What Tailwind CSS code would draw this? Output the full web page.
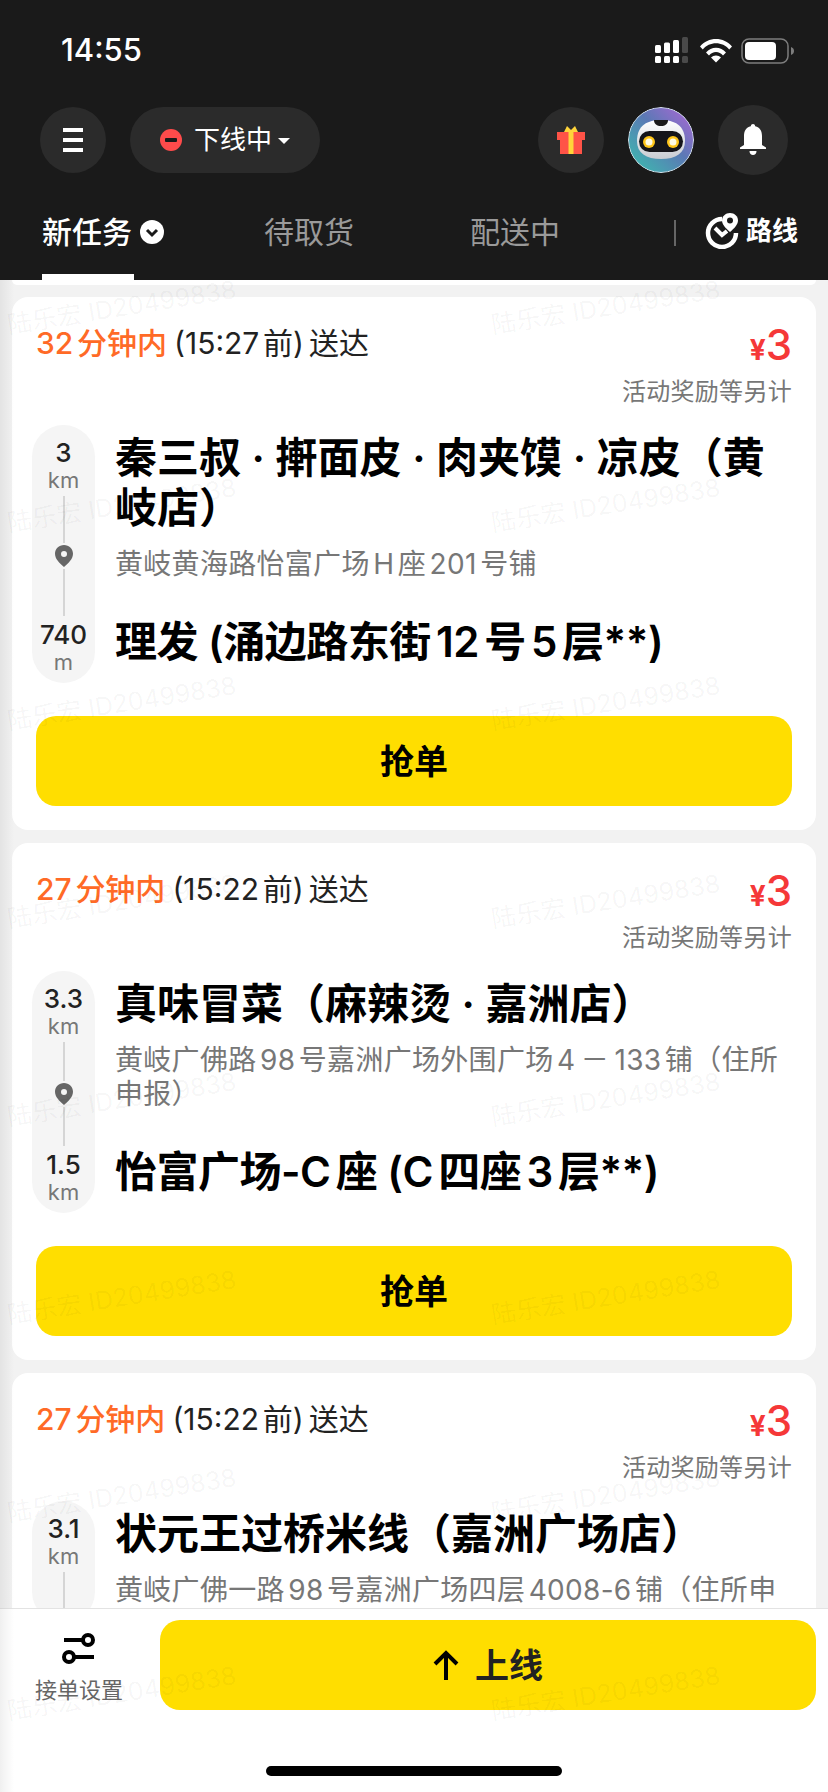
<!DOCTYPE html>
<html lang="zh-CN">
<head>
<meta charset="utf-8">
<script src="https://cdn.jsdelivr.net/npm/@tailwindcss/browser@4"></script>
</head>
<body>
<div class="relative w-[828px] h-[1792px] overflow-hidden flex flex-col bg-[#f2f2f2] font-['Inter','Noto_Sans_CJK_SC',sans-serif] [text-autospace:normal]">

  <!-- header -->
  <header class="relative z-20 h-[280px] shrink-0 bg-[#1a1a1a] text-white">
    <div class="h-[100px] flex items-start justify-between pl-[61px] pr-[34px] pt-[31px]">
      <span class="text-[31px] leading-[38px] font-medium">14:55</span>
      <div class="flex items-center pt-[6px]">
        <svg class="mr-[12px]" width="33" height="27" viewBox="0 0 33 27"><g fill="#fff"><rect x="0" y="19" width="6" height="7" rx="1.5"/><rect x="9" y="19" width="6" height="7" rx="1.5"/><rect x="18" y="19" width="6" height="7" rx="1.5"/><rect x="0" y="8" width="6" height="8" rx="1.5"/><rect x="9" y="5.500" width="6" height="10.500" rx="1.500"/><rect x="18" y="3" width="6" height="13" rx="1.500"/></g><g fill="#4a4a4a"><rect x="27" y="19" width="6" height="7" rx="1.500"/><rect x="27" y="0" width="6" height="16" rx="1.500"/></g></svg>
        <svg class="mr-[9px]" width="32" height="25" viewBox="0 0 32 25" fill="#fff"><path d="M0 8.500C4 3.500 10 1 16 1s12 2.500 16 7.500l-2.800 3C26 7.500 21 5.300 16 5.300S6 7.500 2.800 11.500z"/><path d="M6 14.500c2.600-3 6.200-4.700 10-4.700s7.400 1.700 10 4.700l-3 3c-1.800-2.200-4.300-3.400-7-3.400s-5.200 1.200-7 3.400z"/><path d="M11 19.500c1.300-1.300 3-2 5-2s3.700.7 5 2l-5 5z"/></svg>
        <svg width="53" height="26" viewBox="0 0 53 26"><rect x="1" y="1" width="46" height="24" rx="7" fill="none" stroke="#7d7d7d" stroke-width="1.500"/><rect x="4" y="4" width="31" height="18" rx="4" fill="#fff"/><path d="M50 9c2 .7 3 2.200 3 4s-1 3.300-3 4z" fill="#7d7d7d"/></svg>
      </div>
    </div>

    <div class="flex items-center h-[76px] pl-[40px] pr-[40px] mt-[2px]">
      <div class="w-[66px] h-[66px] rounded-full bg-[#2b2b2b] flex flex-col items-center justify-center gap-[6px]">
        <span class="block w-[20px] h-[4px] bg-white"></span>
        <span class="block w-[20px] h-[4px] bg-white"></span>
        <span class="block w-[20px] h-[4px] bg-white"></span>
      </div>
      <div class="ml-[24px] w-[190px] h-[66px] rounded-full bg-[#2b2b2b] flex items-center pl-[30px]">
        <span class="relative w-[22px] h-[22px] rounded-full bg-[#ff4b4b] flex items-center justify-center"><span class="block w-[12px] h-[4px] rounded-[1px] bg-[#1a1a1a]"></span></span>
        <span class="ml-[12px] text-[26px] leading-[34px] text-white">下线中</span>
        <span class="ml-[6px] mt-[2px] w-0 h-0 border-x-[6px] border-x-transparent border-t-[6px] border-t-white"></span>
      </div>
      <div class="ml-auto w-[66px] h-[66px] rounded-full bg-[#2b2b2b] flex items-center justify-center">
        <svg width="30" height="30" viewBox="0 0 30 30"><path d="M8 7 11 1l4 4 4-4 3 6z" fill="#ffd43a"/><rect x="1" y="7" width="28" height="8" fill="#ff5347"/><rect x="4" y="15" width="22" height="14" fill="#ff5347"/><rect x="12.500" y="7" width="5" height="22" fill="#ffd43a"/></svg>
      </div>
      <div class="ml-[24px] w-[66px] h-[66px] rounded-full overflow-hidden">
        <svg width="66" height="66" viewBox="0 0 66 66">
          <defs>
            <linearGradient id="av" x1="0" y1="1" x2="1" y2="0"><stop offset="0" stop-color="#39c2ae"/><stop offset=".55" stop-color="#5b79b5"/><stop offset="1" stop-color="#b266d8"/></linearGradient>
            <linearGradient id="hd" x1="0" y1="0" x2="0" y2="1"><stop offset="0" stop-color="#ffffff"/><stop offset="1" stop-color="#c8ccd2"/></linearGradient>
          </defs>
          <circle cx="33" cy="33" r="32.500" fill="url(#av)" stroke="#d8e6f0" stroke-width="1"/>
          <path d="M9 34C9 18 20 13 33 13s24 5 24 21c0 12-9 18-24 18S9 46 9 34z" fill="url(#hd)"/>
          <path d="M26 13h14c0 4-3 6-7 6s-7-2-7-6z" fill="#1a1a1a"/>
          <rect x="11" y="24" width="44" height="21" rx="10.500" fill="#15151a"/>
          <circle cx="21" cy="35" r="6" fill="#ffc61a"/><circle cx="21" cy="35" r="3.500" fill="#fffbe6"/>
          <circle cx="45" cy="35" r="6" fill="#ffc61a"/><circle cx="45" cy="35" r="3.500" fill="#fffbe6"/>
        </svg>
      </div>
      <div class="ml-[24px] w-[70px] h-[70px] rounded-full bg-[#2b2b2b] flex items-center justify-center">
        <svg width="26" height="32" viewBox="0 0 26 32" fill="#fff"><path d="M13 0c1.200 0 2 .9 2.200 2.200C20 3.300 22 7 22 12v9l4 2.500V25H0v-1.500L4 21v-9c0-5 2-8.700 6.800-9.800C11 .9 11.800 0 13 0z"/><path d="M9.500 27h7c0 2.500-1.500 4-3.500 4s-3.500-1.500-3.500-4z"/></svg>
      </div>
    </div>

    <nav class="absolute left-0 right-0 top-[206px] h-[74px]">
      <div class="absolute left-[42px] top-[6px] flex items-center">
        <span class="text-[30px] leading-[40px] font-medium text-white">新任务</span>
        <svg class="ml-[8px]" width="24" height="24" viewBox="0 0 24 24"><circle cx="12" cy="12" r="12" fill="#fff"/><path d="M7 10l5 5 5-5" fill="none" stroke="#1a1a1a" stroke-width="3"/></svg>
      </div>
      <span class="absolute left-[42px] bottom-0 w-[92px] h-[6px] bg-white"></span>
      <span class="absolute left-[264px] top-[6px] text-[30px] leading-[40px] text-[#9a9a9a]">待取货</span>
      <span class="absolute left-[470px] top-[6px] text-[30px] leading-[40px] text-[#9a9a9a]">配送中</span>
      <span class="absolute left-[674px] top-[14px] w-[1.500px] h-[26px] bg-[#666]"></span>
      <div class="absolute left-[705px] top-[7px] flex items-center">
        <svg width="34" height="36" viewBox="0 0 34 36" fill="none"><path d="M17 6A14 14 0 1 0 31 20" stroke="#fff" stroke-width="4.500"/><path d="M10 15l7 7 5-4" stroke="#fff" stroke-width="4"/><path d="M25 0c4.500 0 8 3.300 8 7.500 0 4-4 8-8 11.500-4-3.500-8-7.500-8-11.500C17 3.300 20.500 0 25 0z" fill="#fff"/><circle cx="25" cy="7.500" r="3" fill="#1a1a1a"/></svg>
        <span class="ml-[7px] text-[26px] leading-[36px] font-semibold text-white">路线</span>
      </div>
    </nav>
  </header>

  <!-- list -->
  <main class="flex-1 min-h-0 overflow-hidden flex flex-col gap-[13px]">
    <div class="h-[5px] shrink-0 mx-[12px] bg-white rounded-b-[5px] -mb-[1px]"></div>

    <article class="shrink-0 mx-[12px] bg-white rounded-[16px] px-[24px] pt-[26px] pb-[24px]">
      <div class="flex justify-between items-start">
        <p class="text-[30px] leading-[40px] text-[#222]"><span class="font-medium text-[#ff6a26]">32分钟内</span><span class="ml-[7px]">(15:27前)</span><span class="ml-[5px]">送达</span></p>
        <div class="flex flex-col items-end">
          <p class="h-[44px] flex items-baseline text-[#f53838] font-medium"><span class="text-[28px] leading-[44px] font-bold">¥</span><span class="text-[42px] leading-[44px]">3</span></p>
          <p class="mt-[8px] text-[24px] leading-[34px] tracking-[0.3px] text-[#777]">活动奖励等另计</p>
        </div>
      </div>
      <div class="mt-[16px] flex gap-[20px] -ml-[4px]">
        <div class="w-[63px] shrink-0 rounded-full bg-[#f5f5f5] flex flex-col items-center pt-[13px] pb-[9px]">
          <span class="text-[26px] leading-[30px] font-medium text-[#222]">3</span>
          <span class="text-[22px] leading-[24px] text-[#777]">km</span>
          <span class="w-[2px] flex-1 bg-[#d5d5d5] mt-[4px]"></span>
          <svg class="my-[2px]" width="18" height="22" viewBox="0 0 18 22"><path fill="#666" fill-rule="evenodd" d="M9 0c5 0 9 3.800 9 8.700 0 5-4.500 9.500-9 13.300C4.500 18.200 0 13.700 0 8.700 0 3.800 4 0 9 0zm0 6a3 3 0 1 0 0 6 3 3 0 0 0 0-6z"/></svg>
          <span class="w-[2px] flex-1 bg-[#d5d5d5] mb-[4px]"></span>
          <span class="text-[26px] leading-[30px] font-medium text-[#222]">740</span>
          <span class="text-[22px] leading-[24px] text-[#777]">m</span>
        </div>
        <div class="flex-1 min-w-0 pt-[8px] pb-[16px]">
          <h2 class="text-[42px] leading-[50px] font-semibold text-black">秦三叔 · 搟面皮 · 肉夹馍 · 凉皮（黄岐店）</h2>
          <p class="mt-[14px] text-[28px] leading-[34px] tracking-[0.3px] text-[#777]">黄岐黄海路怡富广场H座201号铺</p>
          <h2 class="mt-[36px] text-[42px] leading-[50px] tracking-[-0.5px] font-semibold text-black">理发 (涌边路东街12号5层**)</h2>
        </div>
      </div>
      <button class="mt-[33px] w-full h-[90px] rounded-[20px] bg-[#ffde00] text-[34px] font-semibold text-black">抢单</button>
    </article>

    <article class="shrink-0 mx-[12px] bg-white rounded-[16px] px-[24px] pt-[26px] pb-[24px]">
      <div class="flex justify-between items-start">
        <p class="text-[30px] leading-[40px] text-[#222]"><span class="font-medium text-[#ff6a26]">27分钟内</span><span class="ml-[7px]">(15:22前)</span><span class="ml-[5px]">送达</span></p>
        <div class="flex flex-col items-end">
          <p class="h-[44px] flex items-baseline text-[#f53838] font-medium"><span class="text-[28px] leading-[44px] font-bold">¥</span><span class="text-[42px] leading-[44px]">3</span></p>
          <p class="mt-[8px] text-[24px] leading-[34px] tracking-[0.3px] text-[#777]">活动奖励等另计</p>
        </div>
      </div>
      <div class="mt-[16px] flex gap-[20px] -ml-[4px]">
        <div class="w-[63px] shrink-0 rounded-full bg-[#f5f5f5] flex flex-col items-center pt-[13px] pb-[9px]">
          <span class="text-[26px] leading-[30px] font-medium text-[#222]">3.3</span>
          <span class="text-[22px] leading-[24px] text-[#777]">km</span>
          <span class="w-[2px] flex-1 bg-[#d5d5d5] mt-[4px]"></span>
          <svg class="my-[2px]" width="18" height="22" viewBox="0 0 18 22"><path fill="#666" fill-rule="evenodd" d="M9 0c5 0 9 3.800 9 8.700 0 5-4.500 9.500-9 13.300C4.500 18.200 0 13.700 0 8.700 0 3.800 4 0 9 0zm0 6a3 3 0 1 0 0 6 3 3 0 0 0 0-6z"/></svg>
          <span class="w-[2px] flex-1 bg-[#d5d5d5] mb-[4px]"></span>
          <span class="text-[26px] leading-[30px] font-medium text-[#222]">1.5</span>
          <span class="text-[22px] leading-[24px] text-[#777]">km</span>
        </div>
        <div class="flex-1 min-w-0 pt-[8px] pb-[16px]">
          <h2 class="text-[42px] leading-[50px] font-semibold text-black">真味冒菜（麻辣烫 · 嘉洲店）</h2>
          <p class="mt-[14px] text-[28px] leading-[34px] tracking-[0.3px] text-[#777]">黄岐广佛路98号嘉洲广场外围广场4&thinsp;－&thinsp;133铺（住所<br>申报）</p>
          <h2 class="mt-[36px] text-[42px] leading-[50px] tracking-[-0.5px] font-semibold text-black">怡富广场-C座 (C四座3层**)</h2>
        </div>
      </div>
      <button class="mt-[33px] w-full h-[90px] rounded-[20px] bg-[#ffde00] text-[34px] font-semibold text-black">抢单</button>
    </article>

    <article class="shrink-0 mx-[12px] bg-white rounded-[16px] px-[24px] pt-[26px] pb-[24px]">
      <div class="flex justify-between items-start">
        <p class="text-[30px] leading-[40px] text-[#222]"><span class="font-medium text-[#ff6a26]">27分钟内</span><span class="ml-[7px]">(15:22前)</span><span class="ml-[5px]">送达</span></p>
        <div class="flex flex-col items-end">
          <p class="h-[44px] flex items-baseline text-[#f53838] font-medium"><span class="text-[28px] leading-[44px] font-bold">¥</span><span class="text-[42px] leading-[44px]">3</span></p>
          <p class="mt-[8px] text-[24px] leading-[34px] tracking-[0.3px] text-[#777]">活动奖励等另计</p>
        </div>
      </div>
      <div class="mt-[16px] flex gap-[20px] -ml-[4px]">
        <div class="w-[63px] shrink-0 rounded-full bg-[#f5f5f5] flex flex-col items-center pt-[13px] pb-[9px]">
          <span class="text-[26px] leading-[30px] font-medium text-[#222]">3.1</span>
          <span class="text-[22px] leading-[24px] text-[#777]">km</span>
          <span class="w-[2px] flex-1 bg-[#d5d5d5] mt-[4px]"></span>
        </div>
        <div class="flex-1 min-w-0 pt-[8px] pb-[16px]">
          <h2 class="text-[42px] leading-[50px] font-semibold text-black">状元王过桥米线（嘉洲广场店）</h2>
          <p class="mt-[14px] text-[28px] leading-[34px] tracking-[0.3px] text-[#777]">黄岐广佛一路98号嘉洲广场四层4008-6铺（住所申</p>
        </div>
      </div>
    </article>
  </main>

  <!-- bottom bar -->
  <footer class="relative z-[1] h-[184px] shrink-0 bg-white border-t border-[#e3e3e3]">
    <div class="flex items-start pl-[12px] pr-[12px] pt-[11px]">
      <div class="w-[134px] flex flex-col items-center pt-[13px]">
        <svg width="34" height="32" viewBox="0 0 34 32" fill="none" stroke="#000" stroke-width="4"><path d="M2 7h21"/><circle cx="26" cy="7" r="5"/><path d="M32 24H12"/><circle cx="7" cy="24" r="5"/></svg>
        <span class="mt-[9px] text-[22px] leading-[32px] text-[#666]">接单设置</span>
      </div>
      <button class="ml-[14px] flex-1 h-[90px] rounded-[20px] bg-[#ffde00] flex items-center justify-center gap-[16px]">
        <svg width="26" height="30" viewBox="0 0 26 30" fill="none" stroke="#000" stroke-width="4"><path d="M13 30V3M2 14 13 3l11 11"/></svg>
        <span class="text-[34px] font-semibold text-[#222]">上线</span>
      </button>
    </div>
    <span class="absolute left-[266px] top-[157px] w-[296px] h-[10px] rounded-full bg-black"></span>
  </footer>

  <!-- watermark -->
  <div class="absolute inset-0 z-10 pointer-events-none text-[25px] leading-[32px] text-black/[0.045] whitespace-nowrap">
    <span class="absolute left-[6px] top-[291px] -rotate-[9deg]">陆乐宏 ID20499838</span>
    <span class="absolute left-[490px] top-[291px] -rotate-[9deg]">陆乐宏 ID20499838</span>
    <span class="absolute left-[6px] top-[489px] -rotate-[9deg]">陆乐宏 ID20499838</span>
    <span class="absolute left-[490px] top-[489px] -rotate-[9deg]">陆乐宏 ID20499838</span>
    <span class="absolute left-[6px] top-[687px] -rotate-[9deg]">陆乐宏 ID20499838</span>
    <span class="absolute left-[490px] top-[687px] -rotate-[9deg]">陆乐宏 ID20499838</span>
    <span class="absolute left-[6px] top-[885px] -rotate-[9deg]">陆乐宏 ID20499838</span>
    <span class="absolute left-[490px] top-[885px] -rotate-[9deg]">陆乐宏 ID20499838</span>
    <span class="absolute left-[6px] top-[1083px] -rotate-[9deg]">陆乐宏 ID20499838</span>
    <span class="absolute left-[490px] top-[1083px] -rotate-[9deg]">陆乐宏 ID20499838</span>
    <span class="absolute left-[6px] top-[1281px] -rotate-[9deg]">陆乐宏 ID20499838</span>
    <span class="absolute left-[490px] top-[1281px] -rotate-[9deg]">陆乐宏 ID20499838</span>
    <span class="absolute left-[6px] top-[1479px] -rotate-[9deg]">陆乐宏 ID20499838</span>
    <span class="absolute left-[490px] top-[1479px] -rotate-[9deg]">陆乐宏 ID20499838</span>
    <span class="absolute left-[6px] top-[1677px] -rotate-[9deg]">陆乐宏 ID20499838</span>
    <span class="absolute left-[490px] top-[1677px] -rotate-[9deg]">陆乐宏 ID20499838</span>
  </div>
  <div class="absolute left-0 top-[280px] bottom-0 w-[14px] z-10 pointer-events-none bg-gradient-to-r from-black/[0.06] to-transparent"></div>
</div>
</body>
</html>
